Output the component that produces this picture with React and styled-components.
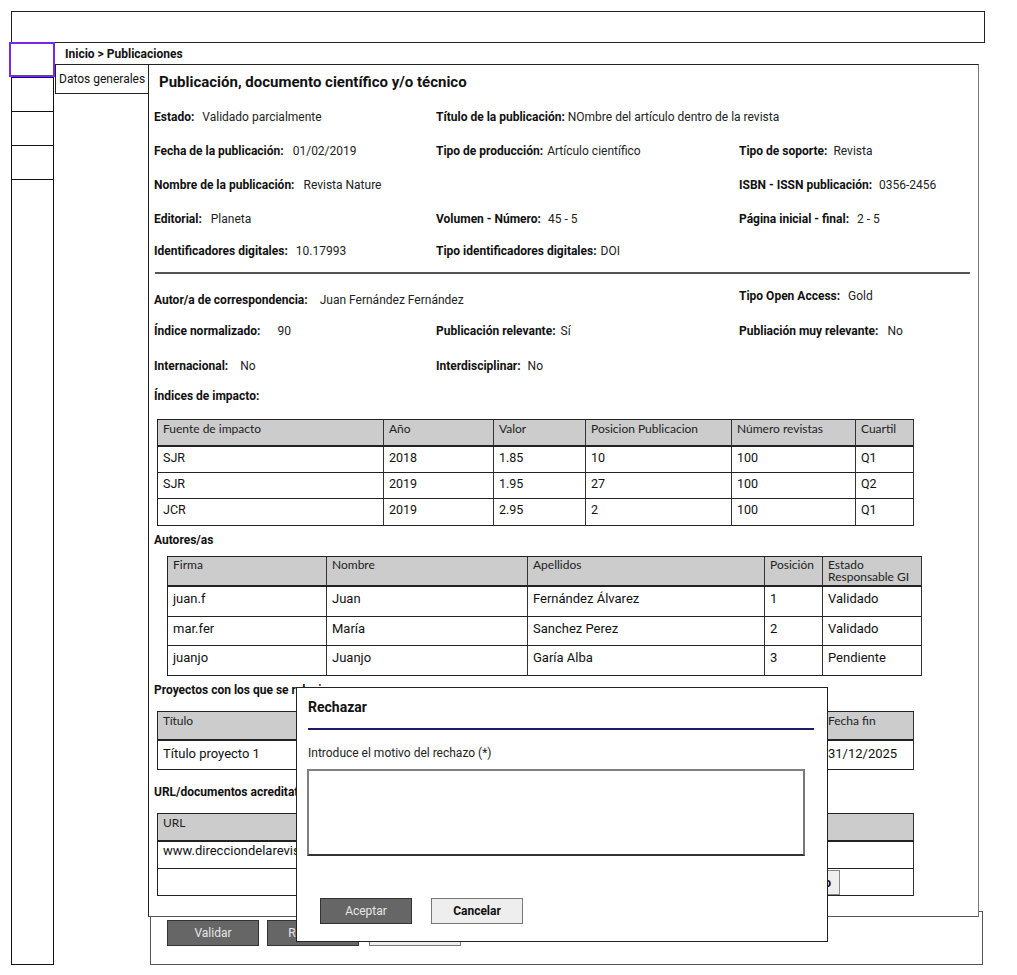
import React from "react";
import styled, { createGlobalStyle } from "styled-components";

const GlobalStyle = createGlobalStyle`
  body {
    margin: 0;
    background: #fff;
    font-family: Roboto, "Liberation Sans", sans-serif;
    color: #222;
  }
  * { box-sizing: border-box; }
`;

const impactCols = "226px 110px 92px 146px 124px 58px";
const impactHead = ["Fuente de impacto", "Año", "Valor", "Posicion Publicacion", "Número revistas", "Cuartil"];
const impactRows = [
  ["SJR", "2018", "1.85", "10", "100", "Q1"],
  ["SJR", "2019", "1.95", "27", "100", "Q2"],
  ["JCR", "2019", "2.95", "2", "100", "Q1"],
];

const authorCols = "159px 201px 237px 58px 99px";
const authorHead = ["Firma", "Nombre", "Apellidos", "Posición", "Estado\nResponsable GI"];
const authorRows = [
  ["juan.f", "Juan", "Fernández Álvarez", "1", "Validado"],
  ["mar.fer", "María", "Sanchez Perez", "2", "Validado"],
  ["juanjo", "Juanjo", "Garía Alba", "3", "Pendiente"],
];

const projectCols = "483px 182px 91px";
const projectHead = ["Título", "Fecha inicio", "Fecha fin"];
const projectRows = [["Título proyecto 1", "01/01/2020", "31/12/2025"]];

export default function App() {
  return (
    <Page>
      <GlobalStyle />
      <TopBar />
      <Layout>
        <Nav>
          <NavItem $active />
          <NavItem />
          <NavItem $overlap />
          <NavItem $overlap />
          <NavRest />
        </Nav>
        <Main>
          <Breadcrumb>Inicio &gt; Publicaciones</Breadcrumb>
          <Workspace>
            <Tab>Datos generales</Tab>
            <Panel>
              <Title>Publicación, documento científico y/o técnico</Title>

              <FieldGrid $rows="34px 34px 34px 33px 31px" $mt={9}>
                <Field $col={1} $gap={8}><Label>Estado:</Label><Value>Validado parcialmente</Value></Field>
                <Field $col={2} $span={2} $gap={3}><Label>Título de la publicación:</Label><Value>NOmbre del artículo dentro de la revista</Value></Field>
                <Field $col={1} $gap={9}><Label>Fecha de la publicación:</Label><Value>01/02/2019</Value></Field>
                <Field $col={2} $gap={4}><Label>Tipo de producción:</Label><Value>Artículo científico</Value></Field>
                <Field $col={3} $gap={6}><Label>Tipo de soporte:</Label><Value>Revista</Value></Field>
                <Field $col={1} $gap={9}><Label>Nombre de la publicación:</Label><Value>Revista Nature</Value></Field>
                <Field $col={3} $gap={7}><Label>ISBN - ISSN publicación:</Label><Value>0356-2456</Value></Field>
                <Field $col={1} $gap={9}><Label>Editorial:</Label><Value>Planeta</Value></Field>
                <Field $col={2} $gap={7}><Label>Volumen - Número:</Label><Value>45 - 5</Value></Field>
                <Field $col={3} $gap={8}><Label>Página inicial - final:</Label><Value>2 - 5</Value></Field>
                <Field $col={1} $gap={8}><Label>Identificadores digitales:</Label><Value>10.17993</Value></Field>
                <Field $col={2} $gap={4}><Label>Tipo identificadores digitales:</Label><Value>DOI</Value></Field>
              </FieldGrid>

              <Divider />

              <FieldGrid $rows="32px 30px 40px" $mt={10}>
                <Field $col={1} $span={2} $gap={12}><Label>Autor/a de correspondencia:</Label><Value>Juan Fernández Fernández</Value></Field>
                <Field $col={3} $gap={8} $top><Label>Tipo Open Access:</Label><Value>Gold</Value></Field>
                <Field $col={1} $gap={17}><Label>Índice normalizado:</Label><Value>90</Value></Field>
                <Field $col={2} $gap={5}><Label>Publicación relevante:</Label><Value>Sí</Value></Field>
                <Field $col={3} $gap={9}><Label>Publiación muy relevante:</Label><Value>No</Value></Field>
                <Field $col={1} $gap={12}><Label>Internacional:</Label><Value>No</Value></Field>
                <Field $col={2} $gap={7}><Label>Interdisciplinar:</Label><Value>No</Value></Field>
              </FieldGrid>

              <SectionTitle $mt={3}>Índices de impacto:</SectionTitle>
              <Grid $cols={impactCols} $mt={16} $ml={8}>
                {impactHead.map((h) => <HeadCell key={h} $h={27}>{h}</HeadCell>)}
                {impactRows.map((r, i) =>
                  r.map((c, j) => <Cell key={`${i}-${j}`} $h={i === 2 ? 27 : 26} $pt={3}>{c}</Cell>)
                )}
              </Grid>

              <SectionTitle $mt={7}>Autores/as</SectionTitle>
              <Grid $cols={authorCols} $mt={9} $ml={18}>
                {authorHead.map((h) => <HeadCell key={h} $h={30} $tight>{h}</HeadCell>)}
                {authorRows.map((r, i) =>
                  r.map((c, j) => <Cell key={`${i}-${j}`} $h={i === 1 ? 29 : 30} $pt={4} $big>{c}</Cell>)
                )}
              </Grid>

              <SectionTitle $mt={7}>Proyectos con los que se relaciona</SectionTitle>
              <Grid $cols={projectCols} $mt={14} $ml={8}>
                {projectHead.map((h) => <HeadCell key={h} $h={29}>{h}</HeadCell>)}
                {projectRows.map((r, i) =>
                  r.map((c, j) => <Cell key={`${i}-${j}`} $h={29} $pt={5} $big>{c}</Cell>)
                )}
              </Grid>

              <SectionTitle $mt={15}>URL/documentos acreditativos</SectionTitle>
              <Grid $cols="756px" $mt={14} $ml={8}>
                <HeadCell $h={28}>URL</HeadCell>
                <Cell $h={27} $pt={1} $big>www.direcciondelarevista.com/articulo</Cell>
                <Cell $h={27} $pt={1}>
                  <FileButton>Ver documento</FileButton>
                </Cell>
              </Grid>
            </Panel>
          </Workspace>
          <ActionBar>
            <Button $dark>Validar</Button>
            <Button $dark>Rechazar</Button>
            <Button $ml={2}>Volver</Button>
          </ActionBar>
        </Main>
      </Layout>

      <Modal>
        <ModalTitle>Rechazar</ModalTitle>
        <ModalRule />
        <ModalLabel>Introduce el motivo del rechazo (*)</ModalLabel>
        <ReasonBox />
        <ModalActions>
          <Button $dark>Aceptar</Button>
          <Button $bold>Cancelar</Button>
        </ModalActions>
      </Modal>
    </Page>
  );
}

const Page = styled.div`
  position: relative;
  width: 1017px;
  height: 975px;
  padding: 11px 0 0 11px;
  overflow: hidden;
`;

const TopBar = styled.div`
  width: 974px;
  height: 32px;
  border: 1px solid #222;
`;

const Layout = styled.div`
  display: flex;
  align-items: flex-start;
`;

const Nav = styled.div`
  width: 43px;
  display: flex;
  flex-direction: column;
`;

const NavItem = styled.div`
  height: 35px;
  width: ${(p) => (p.$active ? 46 : 43)}px;
  margin-left: ${(p) => (p.$active ? -2 : 0)}px;
  margin-top: ${(p) => (p.$active || p.$overlap ? -1 : 0)}px;
  border: ${(p) => (p.$active ? "2px solid #7428f2" : "1px solid #111")};
  background: #fff;
  position: relative;
  z-index: ${(p) => (p.$active ? 2 : 1)};
`;

const NavRest = styled.div`
  width: 43px;
  height: 786px;
  margin-top: -1px;
  border: 1px solid #111;
`;

const Main = styled.div`
  display: flex;
  flex-direction: column;
  width: 931px;
  margin-left: 1px;
`;

const Breadcrumb = styled.div`
  height: 21px;
  line-height: 22px;
  padding-left: 10px;
  font-size: 12px;
  font-weight: 700;
  color: #111;
`;

const Workspace = styled.div`
  display: flex;
  align-items: flex-start;
`;

const Tab = styled.div`
  width: 93px;
  height: 30px;
  border: 1px solid #222;
  border-right: none;
  padding-left: 3px;
  font-size: 12px;
  line-height: 28px;
  color: #111;
`;

const Panel = styled.div`
  position: relative;
  z-index: 1;
  width: 831px;
  height: 853px;
  background: #fff;
  border: 1px solid #222;
  border-right-color: #777;
  border-bottom-color: #555;
  display: flex;
  flex-direction: column;
`;

const Title = styled.h1`
  margin: 0;
  padding: 8px 0 0 10px;
  font-size: 15px;
  line-height: 18px;
  font-weight: 700;
  color: #111;
`;

const FieldGrid = styled.div`
  display: grid;
  grid-template-columns: 282px 303px 1fr;
  grid-template-rows: ${(p) => p.$rows};
  margin-top: ${(p) => p.$mt}px;
  padding-left: 5px;
`;

const Field = styled.div`
  grid-column: ${(p) => p.$col} / span ${(p) => p.$span || 1};
  display: flex;
  align-items: center;
  align-self: ${(p) => (p.$top ? "start" : "center")};
  margin-top: ${(p) => (p.$top ? 5 : 0)}px;
  gap: ${(p) => p.$gap}px;
  font-size: 12px;
  line-height: 14px;
  white-space: nowrap;
`;

const Label = styled.span`
  font-weight: 700;
  color: #111;
`;

const Value = styled.span`
  color: #222;
`;

const Divider = styled.div`
  height: 2px;
  margin: 6px 8px 0 6px;
  background: #555;
`;

const SectionTitle = styled.h2`
  margin: ${(p) => p.$mt}px 0 0 5px;
  font-size: 12px;
  line-height: 14px;
  font-weight: 700;
  color: #111;
  white-space: nowrap;
`;

const Grid = styled.div`
  display: grid;
  grid-template-columns: ${(p) => p.$cols};
  width: max-content;
  margin: ${(p) => p.$mt}px 0 0 ${(p) => p.$ml}px;
  border-left: 1px solid #222;
  border-top: 1px solid #222;
`;

const HeadCell = styled.div`
  height: ${(p) => p.$h}px;
  padding: ${(p) => (p.$tight ? 2 : 3)}px 5px 0;
  background: #cccccc;
  border-right: 1px solid #333;
  border-bottom: 2px solid #222;
  font-family: Lato, "Open Sans", sans-serif;
  font-size: 12px;
  line-height: 12px;
  color: #222;
  white-space: pre-line;
`;

const Cell = styled.div`
  height: ${(p) => p.$h}px;
  padding: ${(p) => p.$pt}px 5px 0;
  display: flex;
  align-items: flex-start;
  border-right: 1px solid #333;
  border-bottom: 1px solid #222;
  font-size: ${(p) => (p.$big ? 13 : 12.5)}px;
  line-height: 16px;
  color: #111;
  white-space: nowrap;
  overflow: hidden;
`;

const FileButton = styled.button`
  margin-left: 577px;
  width: 100px;
  height: 25px;
  border: 1px solid #888;
  background: #eee;
  font-family: Roboto, sans-serif;
  font-size: 12px;
  font-weight: 700;
  color: #111;
`;

const ActionBar = styled.div`
  position: relative;
  z-index: 0;
  display: flex;
  gap: 8px;
  width: 833px;
  height: 54px;
  margin: -6px 0 0 95px;
  padding: 8px 0 0 16px;
  border: 1px solid #555;
`;

const Button = styled.button`
  width: 92px;
  height: 26px;
  margin-left: ${(p) => p.$ml || 0}px;
  border: 1px solid ${(p) => (p.$dark ? "#333" : "#777")};
  background: ${(p) => (p.$dark ? "#666" : "#eee")};
  color: ${(p) => (p.$dark ? "#e6e6e6" : "#111")};
  font-family: Roboto, "Liberation Sans", sans-serif;
  font-size: 12px;
  font-weight: ${(p) => (p.$bold ? 700 : 400)};
  padding: 0;
`;

const Modal = styled.div`
  position: absolute;
  left: 296px;
  top: 687px;
  z-index: 10;
  width: 532px;
  height: 255px;
  padding: 10px 13px 0 11px;
  background: #fff;
  border: 1px solid #222;
  display: flex;
  flex-direction: column;
`;

const ModalTitle = styled.div`
  font-size: 14px;
  line-height: 18px;
  font-weight: 700;
  color: #111;
`;

const ModalRule = styled.div`
  height: 2px;
  margin-top: 12px;
  background: #1f1a6e;
`;

const ModalLabel = styled.div`
  margin-top: 16px;
  font-size: 12px;
  line-height: 14px;
  color: #222;
`;

const ReasonBox = styled.div`
  width: 498px;
  height: 87px;
  margin: 9px 0 0 -1px;
  border: 2px solid #808080;
  border-bottom-color: #333;
  border-right-color: #777;
`;

const ModalActions = styled.div`
  display: flex;
  gap: 19px;
  margin: 42px 0 0 12px;
`;
